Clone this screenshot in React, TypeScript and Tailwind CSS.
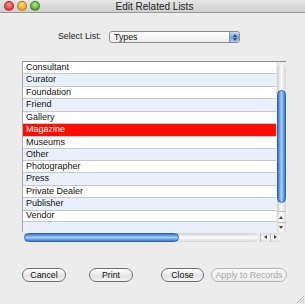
const items = [
  'Consultant',
  'Curator',
  'Foundation',
  'Friend',
  'Gallery',
  'Magazine',
  'Museums',
  'Other',
  'Photographer',
  'Press',
  'Private Dealer',
  'Publisher',
  'Vendor',
];

// row heights in px, averaging ~12.3px like the reference
const rowHeights = ['h-[12px]', 'h-[13px]', 'h-[12px]', 'h-[13px]', 'h-[12px]', 'h-[13px]', 'h-[12px]', 'h-[12px]', 'h-[12px]', 'h-[13px]', 'h-[12px]', 'h-[13px]', 'h-[11px]'];

function TrafficLight({ color }: { color: string }) {
  return <div className={`w-[10px] h-[10px] rounded-full border border-black/25 ${color}`} />;
}

function Button({ label, width, disabled }: { label: string; width: string; disabled?: boolean }) {
  return (
    <div
      className={`${width} h-[14px] rounded-full border flex items-center justify-center text-[8.8px] leading-none whitespace-nowrap ${
        disabled
          ? 'border-[#b4b4b4] text-[#a8a8a8] bg-[linear-gradient(#f8f8f8,#ececec)]'
          : 'border-[#6f6f6f] text-[#111] bg-[linear-gradient(#ffffff,#e4e4e4_60%,#f4f4f4)]'
      }`}
    >
      {label}
    </div>
  );
}

function Tri({ dir }: { dir: 'up' | 'down' | 'left' | 'right' }) {
  const pts = {
    up: '2,0 4,3 0,3',
    down: '0,0 4,0 2,3',
    left: '0,2 3,0 3,4',
    right: '0,0 3,2 0,4',
  }[dir];
  const vb = dir === 'up' || dir === 'down' ? '0 0 4 3' : '0 0 3 4';
  const size = dir === 'up' || dir === 'down' ? 'w-[4px] h-[3px]' : 'w-[3px] h-[4px]';
  return (
    <svg viewBox={vb} className={size}>
      <polygon points={pts} fill="#444" />
    </svg>
  );
}

export default function App() {
  return (
    <div className="w-[305px] h-[304px] bg-[#ececec] flex flex-col relative overflow-hidden font-['Liberation_Sans',Arial,sans-serif]">
      {/* Title bar */}
      <div className="h-[13px] shrink-0 flex items-center pl-[4px] border-b border-[#9a9a9a] bg-[linear-gradient(#e6e6e6,#cfcfcf)]">
        <div className="flex gap-[3px]">
          <TrafficLight color="bg-[radial-gradient(circle_at_50%_35%,#ff9a93,#e0372f_70%)]" />
          <TrafficLight color="bg-[radial-gradient(circle_at_50%_35%,#ffe08a,#e9a21a_70%)]" />
          <TrafficLight color="bg-[radial-gradient(circle_at_50%_35%,#b9ef8e,#4ea52c_70%)]" />
        </div>
        <div className="flex-1 text-center text-[10px] text-[#222] pr-[36px] whitespace-nowrap">Edit Related Lists</div>
      </div>

      {/* Select row */}
      <div className="mt-[18px] h-[12px] flex items-center pl-[58px]">
        <span className="text-[8.8px] text-[#222] w-[51px] whitespace-nowrap">Select List:</span>
        <div className="w-[131px] h-[12px] rounded-[3px] border border-[#8c8c8c] flex items-stretch overflow-hidden bg-[linear-gradient(#ffffff,#ededed)]">
          <div className="flex-1 text-[8.8px] leading-[10px] text-[#111] pl-[4px]">Types</div>
          <div className="w-[10px] flex flex-col items-center justify-center gap-[1px] bg-[linear-gradient(#c7dcf8,#6fa3e8_55%,#a9ccf5)] border-l border-[#7a9ac8]">
            <Tri dir="up" />
            <Tri dir="down" />
          </div>
        </div>
      </div>

      {/* List table */}
      <div className="mt-[18px] ml-[22px] w-[264px] flex flex-col">
        <div className="flex h-[171px] border-t border-[#8f8f8f]">
          <div className="flex-1 flex flex-col border-l border-[#a8a8a8] bg-[#eaf0fb]">
            {items.map((name, i) => {
              const selected = name === 'Magazine';
              const bg = selected ? 'bg-[#ff0d00] text-white' : i % 2 === 0 ? 'bg-white text-[#111]' : 'bg-[#eaf0fb] text-[#111]';
              return (
                <div
                  key={name}
                  className={`${rowHeights[i]} shrink-0 flex items-center pl-[3px] text-[9px] border-b border-[#c8c8c8] ${bg}`}
                >
                  {name}
                </div>
              );
            })}
          </div>
          {/* Vertical scrollbar */}
          <div className="w-[10px] flex flex-col items-center bg-[#ececec]">
            <div className="w-[9px] mt-[2px] h-[147px] rounded-t-full bg-[linear-gradient(90deg,#cfcfcf,#fbfbfb_50%,#d6d6d6)] flex flex-col">
              <div className="mt-[26px] h-[113px] rounded-full border border-[#2f62b3] bg-[linear-gradient(90deg,#3b76d0,#a6d0fa_50%,#3b76d0)]" />
            </div>
            <div className="w-[9px] h-[11px] flex items-center justify-center bg-[linear-gradient(90deg,#dcdcdc,#fafafa,#dcdcdc)] border-t border-[#bdbdbd]">
              <Tri dir="up" />
            </div>
            <div className="w-[9px] h-[10px] flex items-center justify-center bg-[linear-gradient(90deg,#dcdcdc,#fafafa,#dcdcdc)] border-t border-[#bdbdbd]">
              <Tri dir="down" />
            </div>
          </div>
        </div>
        {/* Horizontal scrollbar */}
        <div className="flex h-[10px]">
          <div className="flex-1 flex items-center">
            <div className="ml-[2px] w-[234px] h-[9px] rounded-r-full bg-[linear-gradient(#cfcfcf,#fbfbfb_50%,#d6d6d6)] flex items-center">
              <div className="w-[155px] h-[9px] rounded-full border border-[#2f62b3] bg-[linear-gradient(#3b76d0,#a6d0fa_50%,#3b76d0)]" />
            </div>
            <div className="ml-[2px] w-[10px] h-[9px] flex items-center justify-center border-l border-[#bdbdbd] bg-[linear-gradient(#dcdcdc,#fafafa,#dcdcdc)]">
              <Tri dir="left" />
            </div>
            <div className="w-[10px] h-[9px] flex items-center justify-center border-l border-[#bdbdbd] bg-[linear-gradient(#dcdcdc,#fafafa,#dcdcdc)]">
              <Tri dir="right" />
            </div>
          </div>
          <div className="w-[10px]" />
        </div>
      </div>

      {/* Buttons */}
      <div className="mt-[26px] flex items-center pl-[22px]">
        <Button label="Cancel" width="w-[44px]" />
        <div className="w-[23px]" />
        <Button label="Print" width="w-[44px]" />
        <div className="w-[28px]" />
        <Button label="Close" width="w-[43px]" />
        <div className="w-[7px]" />
        <Button label="Apply to Records" width="w-[76px]" disabled />
      </div>

      {/* Resize grip */}
      <svg className="absolute right-[1px] bottom-[1px] w-[8px] h-[8px]" viewBox="0 0 8 8">
        <line x1="1" y1="8" x2="8" y2="1" stroke="#9a9a9a" strokeWidth="0.7" />
        <line x1="4" y1="8" x2="8" y2="4" stroke="#9a9a9a" strokeWidth="0.7" />
        <line x1="7" y1="8" x2="8" y2="7" stroke="#9a9a9a" strokeWidth="0.7" />
      </svg>
    </div>
  );
}
